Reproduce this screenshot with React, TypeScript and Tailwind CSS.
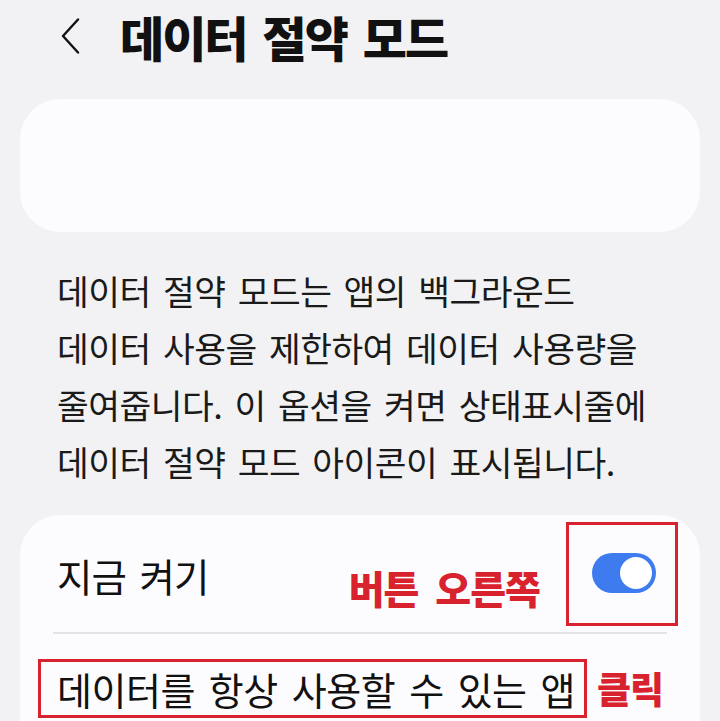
export default function App() {
  return (
    <div className="w-[720px] h-[721px] overflow-hidden bg-[#f2f2f4] flex flex-col font-['Noto_Sans_CJK_KR','Noto_Sans',sans-serif] text-[#111]">
      {/* header */}
      <div className="h-[72px] flex items-center pl-[60px] shrink-0">
        <svg width="20" height="36" viewBox="0 0 20 36" fill="none">
          <path d="M18 1.5 L3 18 L18 34.5" stroke="#111" strokeWidth="2.4" strokeLinecap="round" strokeLinejoin="round" />
        </svg>
        <h1 className="ml-[40px] text-[48px] font-black tracking-[-2px] [word-spacing:7px] leading-none whitespace-nowrap">
          데이터 절약 모드
        </h1>
      </div>

      {/* empty card */}
      <div className="mt-[27px] mx-[20px] h-[133px] rounded-[40px] bg-[#fcfcfe] shrink-0" />

      {/* description */}
      <p className="mt-[30px] px-[57px] text-[34.5px] leading-[57px] tracking-[-0.5px] [word-spacing:5px] text-[#1a1a1a] whitespace-nowrap shrink-0">
        데이터 절약 모드는 앱의 백그라운드
        <br />
        데이터 사용을 제한하여 데이터 사용량을
        <br />
        줄여줍니다. 이 옵션을 켜면 상태표시줄에
        <br />
        데이터 절약 모드 아이콘이 표시됩니다.
      </p>

      {/* settings card */}
      <div className="mt-[25px] mx-[20px] flex-1 rounded-t-[40px] bg-[#fcfcfe] flex flex-col">
        <div className="h-[117px] flex items-center pl-[37px] pr-[22px]">
          <span className="text-[38.5px] tracking-[-1px] [word-spacing:6px] leading-none pt-[4px] whitespace-nowrap">지금 켜기</span>
          <span className="ml-auto mt-[28px] text-[39px] font-black text-[#d8232e] tracking-[-1px] [word-spacing:9px] leading-none whitespace-nowrap">
            버튼 오른쪽
          </span>
          <div className="ml-[26px] w-[112px] h-[104px] border-[3px] border-[#d8232e] flex items-center justify-center">
            <div className="w-[64px] h-[40px] rounded-full bg-[#3d7bef] flex items-center justify-end pr-[4px] ml-[4px] mb-[2px]">
              <div className="w-[32px] h-[32px] rounded-full bg-white" />
            </div>
          </div>
        </div>
        <div className="mx-[33px] h-[2px] bg-[#e4e4e6]" />
        <div className="mt-[25px] flex items-center pl-[18px]">
          <div className="h-[59px] w-[549px] border-[3px] border-[#d8232e] flex items-center pl-[16px]">
            <span className="text-[38px] tracking-[-0.5px] [word-spacing:6px] leading-none whitespace-nowrap">
              데이터를 항상 사용할 수 있는 앱
            </span>
          </div>
          <span className="ml-[10px] text-[37px] font-black text-[#d8232e] leading-none tracking-[-1px]">클릭</span>
        </div>
      </div>
    </div>
  );
}
